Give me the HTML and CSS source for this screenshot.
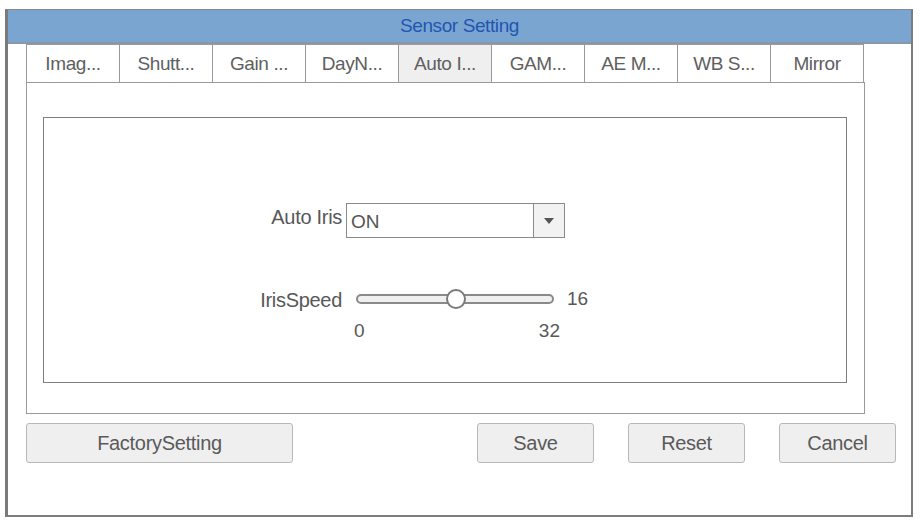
FILE: index.html
```html
<!DOCTYPE html>
<html>
<head>
<meta charset="utf-8">
<link rel="stylesheet" href="styles.css">
</head>
<body>
<div class="window">
  <div class="titlebar">Sensor Setting</div>
  <div class="content">
    <div class="tabs">
      <div class="tab">Imag...</div>
      <div class="tab">Shutt...</div>
      <div class="tab">Gain ...</div>
      <div class="tab">DayN...</div>
      <div class="tab active">Auto I...</div>
      <div class="tab">GAM...</div>
      <div class="tab">AE M...</div>
      <div class="tab">WB S...</div>
      <div class="tab">Mirror</div>
    </div>
    <div class="panel">
      <div class="group">
        <div class="form">
          <div class="label">Auto Iris</div>
          <div class="select">
            <span class="value">ON</span>
            <span class="arrow"><svg width="10" height="6" viewBox="0 0 10 6"><path d="M0 0 L10 0 L5 6 Z" fill="#555"/></svg></span>
          </div>
          <div class="label speed-label">IrisSpeed</div>
          <div class="slider-wrap">
            <div class="slider-row">
              <div class="track"><div class="thumb"></div></div>
              <span class="slider-val">16</span>
            </div>
            <div class="scale"><span>0</span><span>32</span></div>
          </div>
        </div>
      </div>
    </div>
    <div class="buttons">
      <button class="btn factory">FactorySetting</button>
      <div class="right-btns">
        <button class="btn">Save</button>
        <button class="btn">Reset</button>
        <button class="btn">Cancel</button>
      </div>
    </div>
  </div>
</div>
</body>
</html>
```

FILE: styles.css
```css
html, body {
  margin: 0;
  padding: 0;
  background: #ffffff;
}
body {
  font-family: "Liberation Sans", Arial, sans-serif;
  color: #5a5a5a;
}
.window {
  box-sizing: border-box;
  margin: 9px 0 0 5px;
  width: 908px;
  height: 508px;
  border: 2px solid #7c7c7c;
  border-left: 3px solid #7a7a7a;
  border-top: 1px solid #8a8a8a;
  background: #fff;
}
.titlebar {
  height: 32px;
  background: #7ba5d1;
  border-bottom: 2px solid #8b97a6;
  color: #2256b0;
  font-size: 19px;
  line-height: 32px;
  text-align: center;
  letter-spacing: -0.4px;
}
.content {
  padding: 0 0 0 18px;
}
.tabs {
  display: flex;
  width: 838px;
  height: 38px;
}
.tab {
  flex: 1;
  box-sizing: border-box;
  border: 1px solid #9a9a9a;
  border-bottom: none;
  border-left: none;
  text-align: center;
  line-height: 38px;
  font-size: 19px;
  color: #606060;
  letter-spacing: -0.4px;
}
.tab:first-child {
  border-left: 1px solid #9a9a9a;
}
.tab.active {
  background: #efefef;
}
.panel {
  box-sizing: border-box;
  width: 839px;
  height: 332px;
  border: 1px solid #9a9a9a;
  padding: 34px 17px 0 16px;
}
.group {
  box-sizing: border-box;
  height: 266px;
  border: 1px solid #7e7e7e;
  padding-top: 85px;
}
.form {
  display: grid;
  grid-template-columns: 298px auto;
  column-gap: 4px;
  align-items: start;
}
.label {
  text-align: right;
  font-size: 20px;
  color: #585858;
  letter-spacing: -0.3px;
}
.form > .label:first-child {
  line-height: 28px;
}
.select {
  box-sizing: border-box;
  width: 219px;
  height: 35px;
  border: 1px solid #8a8a8a;
  display: flex;
  align-items: stretch;
}
.select .value {
  flex: 1;
  font-size: 19px;
  line-height: 35px;
  padding-left: 4px;
  color: #555;
}
.select .arrow {
  width: 30px;
  border-left: 1px solid #8a8a8a;
  background: #f2f2f2;
  display: flex;
  align-items: center;
  justify-content: center;
}
.speed-label {
  margin-top: 50px;
  line-height: 24px;
}
.slider-wrap {
  margin-top: 48px;
  padding-left: 10px;
}
.slider-row {
  display: flex;
  align-items: center;
  height: 26px;
}
.track {
  position: relative;
  box-sizing: border-box;
  width: 198px;
  height: 10px;
  border: 2px solid #8a8a8a;
  border-radius: 5px;
  background: #f0f0f0;
}
.thumb {
  position: absolute;
  left: 88px;
  top: -7px;
  box-sizing: border-box;
  width: 20px;
  height: 20px;
  border: 2px solid #7a7a7a;
  border-radius: 50%;
  background: #fff;
}
.slider-val {
  margin-left: 13px;
  font-size: 19px;
  color: #585858;
}
.scale {
  display: flex;
  justify-content: space-between;
  width: 206px;
  margin-left: -2px;
  margin-top: 8px;
  font-size: 19px;
  color: #585858;
}
.buttons {
  display: flex;
  justify-content: space-between;
  width: 870px;
  margin-top: 9px;
}
.right-btns {
  display: flex;
  gap: 34px;
}
.btn {
  box-sizing: border-box;
  height: 40px;
  width: 117px;
  border: 1.5px solid #b8b8b8;
  border-radius: 3px;
  background: #efefef;
  font-family: "Liberation Sans", Arial, sans-serif;
  font-size: 20px;
  color: #5a5a5a;
  padding: 0;
  letter-spacing: -0.3px;
}
.btn.factory {
  width: 267px;
}
```
